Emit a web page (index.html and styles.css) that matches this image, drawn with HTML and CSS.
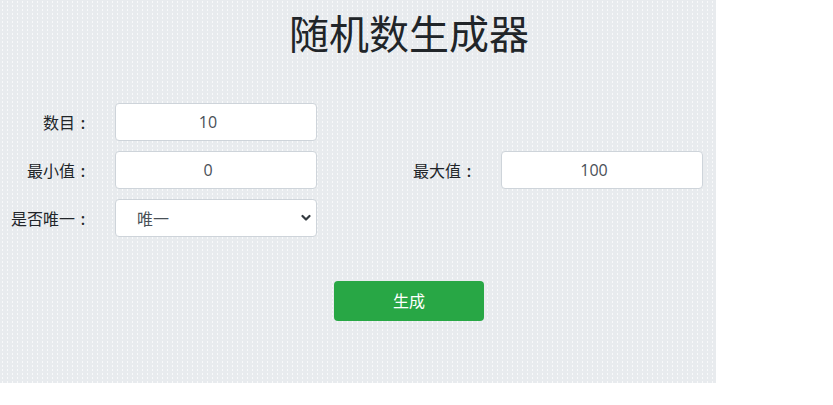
FILE: index.html
```html
<!DOCTYPE html>
<html lang="zh-CN">
<head>
<meta charset="utf-8">
<title>随机数生成器</title>
<link rel="stylesheet" href="styles.css">
</head>
<body>
<div class="panel">
  <div class="form">
    <h1 class="title">随机数生成器</h1>
    <div class="row">
      <label class="label">数目<span class="colon">:</span></label>
      <input class="field" type="text" value="10">
    </div>
    <div class="row">
      <label class="label">最小值<span class="colon">:</span></label>
      <input class="field" type="text" value="0">
      <label class="label">最大值<span class="colon">:</span></label>
      <input class="field" type="text" value="100">
    </div>
    <div class="row">
      <label class="label">是否唯一<span class="colon">:</span></label>
      <div class="select-wrap">
        <select class="select">
          <option>唯一</option>
          <option>不唯一</option>
        </select>
        <svg class="chev" width="10" height="8" viewBox="0 0 10 8"><path d="M1.5 2 L5 5.5 L8.5 2" fill="none" stroke="#343a40" stroke-width="2.2" stroke-linecap="round" stroke-linejoin="round"/></svg>
      </div>
    </div>
    <div class="actions">
      <button class="btn" type="button">生成</button>
    </div>
  </div>
</div>
</body>
</html>
```
FILE: styles.css
```css
html, body {
  margin: 0;
  padding: 0;
  background: #ffffff;
}
body {
  font-family: "Noto Sans CJK SC", "Open Sans", sans-serif;
  color: #212529;
}
.panel {
  width: 716px;
  height: 383px;
  background-color: #e8ebee;
  background-image: radial-gradient(rgba(255,255,255,0.7) 0.7px, transparent 1px);
  background-size: 5px 4px;
  box-sizing: border-box;
  padding-top: 8px;
}
.form {
  display: flex;
  flex-direction: column;
}
.title {
  margin: 0 0 0 115px;
  width: 588px;
  text-align: center;
  font-size: 40px;
  font-weight: 400;
  line-height: 48px;
  height: 48px;
  margin-bottom: 47px;
  color: #212529;
}
.row {
  display: grid;
  grid-template-columns: 100px 202px 154px 202px;
  column-gap: 15px;
  align-items: center;
  height: 38px;
  margin-bottom: 10px;
}
.label {
  text-align: right;
  font-size: 16px;
  line-height: 24px;
  color: #212529;
  padding-right: 9px;
  white-space: nowrap;
}
.colon {
  display: inline-block;
  width: 16px;
  text-align: center;
  font-family: "Open Sans", sans-serif;
  font-weight: 600;
}
.field, .select {
  box-sizing: border-box;
  width: 202px;
  height: 38px;
  border: 1px solid #ced4da;
  border-radius: 4px;
  background: #fff;
  font-family: "Open Sans", "Noto Sans CJK SC", sans-serif;
  font-size: 16px;
  color: #495057;
  text-align: center;
  padding: 0 28px 0 12px;
  outline: none;
}
.select-wrap {
  position: relative;
  width: 202px;
  height: 38px;
}
.select {
  appearance: none;
  -webkit-appearance: none;
  text-align: left;
  padding-left: 21px;
  font-family: "Noto Sans CJK SC", sans-serif;
  font-size: 16px;
}
.chev {
  position: absolute;
  right: 6px;
  top: 15px;
  pointer-events: none;
}
.actions {
  display: flex;
  justify-content: center;
  margin-left: 115px;
  width: 588px;
  margin-top: 34px;
}
.btn {
  width: 150px;
  height: 40px;
  border: none;
  border-radius: 4px;
  background: #28a745;
  color: #fff;
  font-family: "Noto Sans CJK SC", sans-serif;
  font-size: 16px;
  padding: 0 0 3px;
}
```
